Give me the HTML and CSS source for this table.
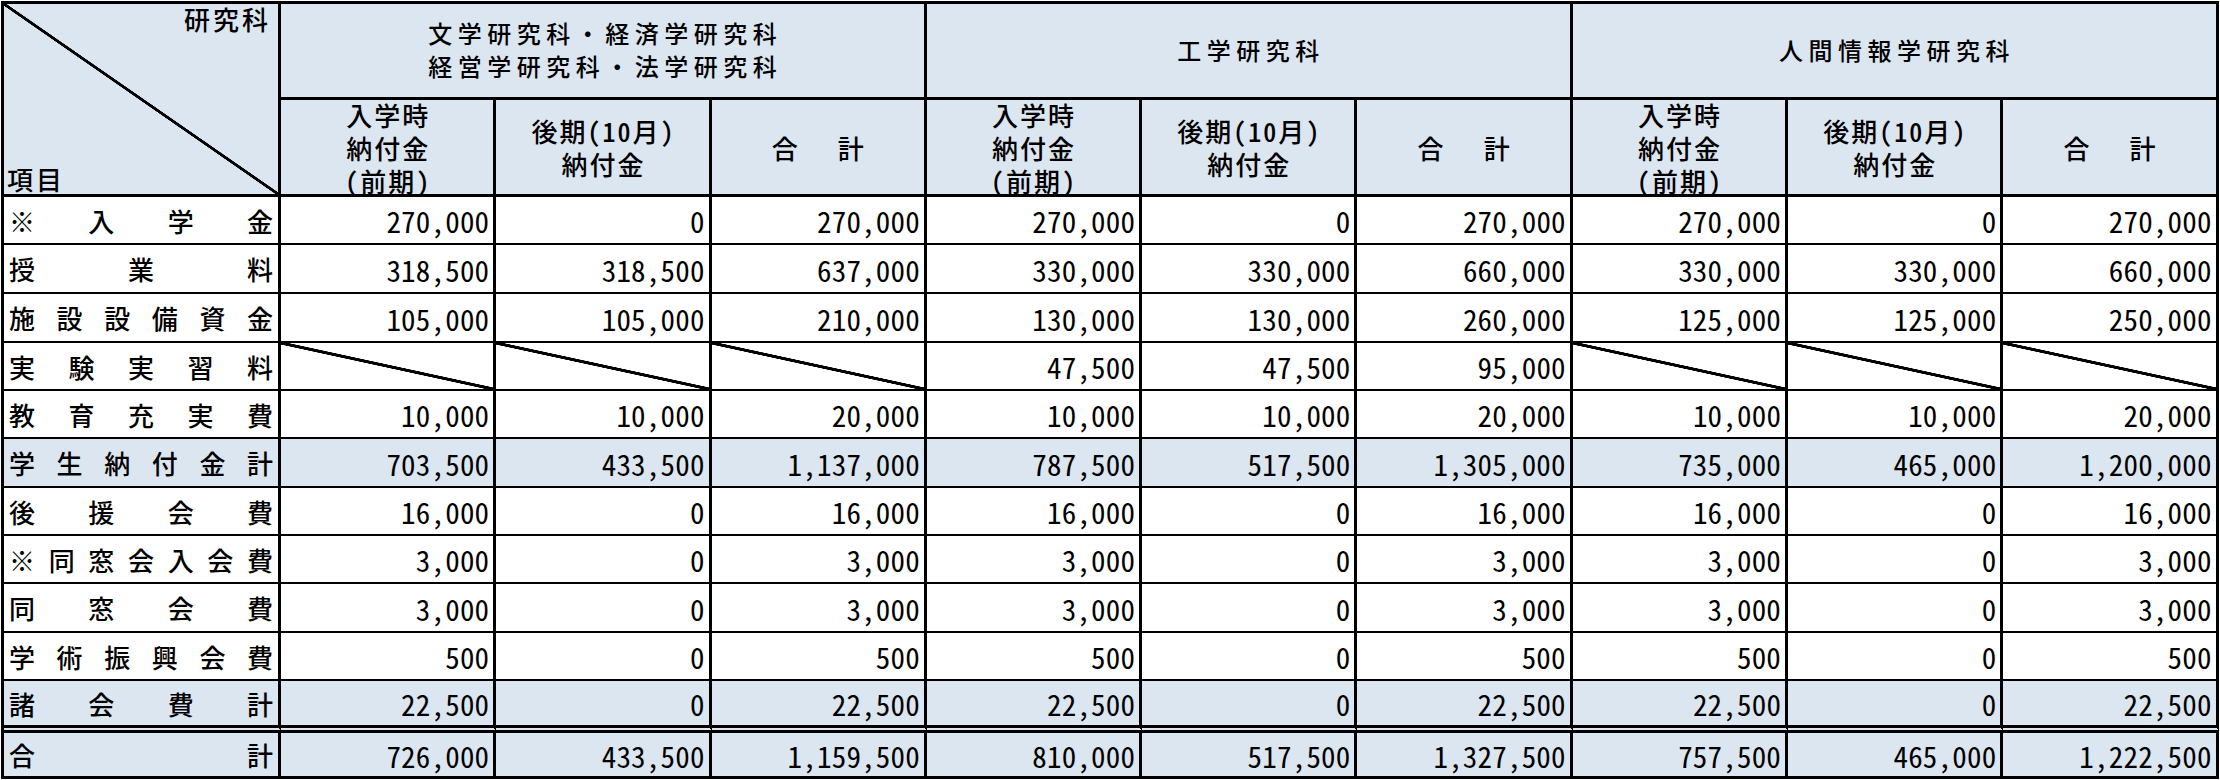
FILE: index.html
```html
<!DOCTYPE html>
<html lang="ja">
<head>
<meta charset="utf-8">
<title>学生納付金</title>
<link rel="stylesheet" href="styles.css">
</head>
<body>
<div class="sheet">
  <div class="cell hd corner"><span class="corner-top">研究科</span><span class="corner-bottom">項目</span></div>
  <div class="cell hd group"><p>文学研究科・経済学研究科<br>経営学研究科・法学研究科</p></div>
  <div class="cell hd group"><p>工学研究科</p></div>
  <div class="cell hd group"><p>人間情報学研究科</p></div>

  <div class="cell hd sub"><p>入学時<br>納付金<br>(前期)</p></div>
  <div class="cell hd sub"><p>後期(10月)<br>納付金</p></div>
  <div class="cell hd sub"><p class="pair"><span>合</span><span>計</span></p></div>
  <div class="cell hd sub"><p>入学時<br>納付金<br>(前期)</p></div>
  <div class="cell hd sub"><p>後期(10月)<br>納付金</p></div>
  <div class="cell hd sub"><p class="pair"><span>合</span><span>計</span></p></div>
  <div class="cell hd sub"><p>入学時<br>納付金<br>(前期)</p></div>
  <div class="cell hd sub"><p>後期(10月)<br>納付金</p></div>
  <div class="cell hd sub"><p class="pair"><span>合</span><span>計</span></p></div>

  <div class="cell label"><span>※</span><span>入</span><span>学</span><span>金</span></div>
  <div class="cell num">270,000</div><div class="cell num">0</div><div class="cell num">270,000</div>
  <div class="cell num">270,000</div><div class="cell num">0</div><div class="cell num">270,000</div>
  <div class="cell num">270,000</div><div class="cell num">0</div><div class="cell num">270,000</div>

  <div class="cell label"><span>授</span><span>業</span><span>料</span></div>
  <div class="cell num">318,500</div><div class="cell num">318,500</div><div class="cell num">637,000</div>
  <div class="cell num">330,000</div><div class="cell num">330,000</div><div class="cell num">660,000</div>
  <div class="cell num">330,000</div><div class="cell num">330,000</div><div class="cell num">660,000</div>

  <div class="cell label"><span>施</span><span>設</span><span>設</span><span>備</span><span>資</span><span>金</span></div>
  <div class="cell num">105,000</div><div class="cell num">105,000</div><div class="cell num">210,000</div>
  <div class="cell num">130,000</div><div class="cell num">130,000</div><div class="cell num">260,000</div>
  <div class="cell num">125,000</div><div class="cell num">125,000</div><div class="cell num">250,000</div>

  <div class="cell label"><span>実</span><span>験</span><span>実</span><span>習</span><span>料</span></div>
  <div class="cell slash"></div><div class="cell slash"></div><div class="cell slash"></div>
  <div class="cell num">47,500</div><div class="cell num">47,500</div><div class="cell num">95,000</div>
  <div class="cell slash"></div><div class="cell slash"></div><div class="cell slash"></div>

  <div class="cell label"><span>教</span><span>育</span><span>充</span><span>実</span><span>費</span></div>
  <div class="cell num">10,000</div><div class="cell num">10,000</div><div class="cell num">20,000</div>
  <div class="cell num">10,000</div><div class="cell num">10,000</div><div class="cell num">20,000</div>
  <div class="cell num">10,000</div><div class="cell num">10,000</div><div class="cell num">20,000</div>

  <div class="cell label sum"><span>学</span><span>生</span><span>納</span><span>付</span><span>金</span><span>計</span></div>
  <div class="cell num sum">703,500</div><div class="cell num sum">433,500</div><div class="cell num sum">1,137,000</div>
  <div class="cell num sum">787,500</div><div class="cell num sum">517,500</div><div class="cell num sum">1,305,000</div>
  <div class="cell num sum">735,000</div><div class="cell num sum">465,000</div><div class="cell num sum">1,200,000</div>

  <div class="cell label"><span>後</span><span>援</span><span>会</span><span>費</span></div>
  <div class="cell num">16,000</div><div class="cell num">0</div><div class="cell num">16,000</div>
  <div class="cell num">16,000</div><div class="cell num">0</div><div class="cell num">16,000</div>
  <div class="cell num">16,000</div><div class="cell num">0</div><div class="cell num">16,000</div>

  <div class="cell label"><span>※</span><span>同</span><span>窓</span><span>会</span><span>入</span><span>会</span><span>費</span></div>
  <div class="cell num">3,000</div><div class="cell num">0</div><div class="cell num">3,000</div>
  <div class="cell num">3,000</div><div class="cell num">0</div><div class="cell num">3,000</div>
  <div class="cell num">3,000</div><div class="cell num">0</div><div class="cell num">3,000</div>

  <div class="cell label"><span>同</span><span>窓</span><span>会</span><span>費</span></div>
  <div class="cell num">3,000</div><div class="cell num">0</div><div class="cell num">3,000</div>
  <div class="cell num">3,000</div><div class="cell num">0</div><div class="cell num">3,000</div>
  <div class="cell num">3,000</div><div class="cell num">0</div><div class="cell num">3,000</div>

  <div class="cell label"><span>学</span><span>術</span><span>振</span><span>興</span><span>会</span><span>費</span></div>
  <div class="cell num">500</div><div class="cell num">0</div><div class="cell num">500</div>
  <div class="cell num">500</div><div class="cell num">0</div><div class="cell num">500</div>
  <div class="cell num">500</div><div class="cell num">0</div><div class="cell num">500</div>

  <div class="cell label sum dbl"><span>諸</span><span>会</span><span>費</span><span>計</span></div>
  <div class="cell num sum dbl">22,500</div><div class="cell num sum dbl">0</div><div class="cell num sum dbl">22,500</div>
  <div class="cell num sum dbl">22,500</div><div class="cell num sum dbl">0</div><div class="cell num sum dbl">22,500</div>
  <div class="cell num sum dbl">22,500</div><div class="cell num sum dbl">0</div><div class="cell num sum dbl">22,500</div>

  <div class="cell label sum last"><span>合</span><span>計</span></div>
  <div class="cell num sum last">726,000</div><div class="cell num sum last">433,500</div><div class="cell num sum last">1,159,500</div>
  <div class="cell num sum last">810,000</div><div class="cell num sum last">517,500</div><div class="cell num sum last">1,327,500</div>
  <div class="cell num sum last">757,500</div><div class="cell num sum last">465,000</div><div class="cell num sum last">1,222,500</div>
</div>
</body>
</html>
```

FILE: styles.css
```css
* {
  box-sizing: border-box;
}

body {
  margin: 0;
  background: #ffffff;
  color: #000000;
  font-family: "Noto Sans CJK JP", "Noto Sans", sans-serif;
  font-weight: 500;
}

p {
  margin: 0;
}

.sheet {
  display: grid;
  grid-template-columns: 277px repeat(9, 215.3px);
  grid-template-rows: 96px 97px 48px 49px 49px 48px 48px 49px 48px 48px 49px 48px 52px 46px;
  width: max-content;
  margin: 1px 0 0 1px;
  border-top: 3px solid #000;
  border-left: 3px solid #000;
}

.cell {
  display: flex;
  align-items: center;
  min-width: 0;
  background: #ffffff;
  border-right: 3px solid #000;
  border-bottom: 2px solid #000;
  white-space: nowrap;
}

.hd {
  background: #dce6f1;
  border-bottom-width: 3px;
}

.sum {
  background: #dce6f1;
}

.last {
  border-bottom-width: 3px;
}

.dbl {
  border-bottom: 8px double #000;
}

.corner {
  grid-row: span 2;
  flex-direction: column;
  align-items: stretch;
  justify-content: space-between;
  font-size: 26px;
  line-height: 30px;
  letter-spacing: 3px;
  background:
    linear-gradient(to top right,
      transparent calc(50% - 1.7px),
      #000 calc(50% - 1.2px),
      #000 calc(50% + 1.2px),
      transparent calc(50% + 1.7px)) no-repeat,
    #dce6f1;
}

.corner-top {
  align-self: flex-end;
  padding-right: 7px;
}

.corner-bottom {
  align-self: flex-start;
  padding-left: 3px;
}

.group {
  grid-column: span 3;
  justify-content: center;
  text-align: center;
  font-size: 24px;
  line-height: 33px;
  letter-spacing: 5.5px;
  padding: 0 0 3px 5.5px;
}

.sub {
  justify-content: center;
  text-align: center;
  font-size: 26px;
  line-height: 33px;
  letter-spacing: 2px;
  padding-left: 2px;
  font-feature-settings: "hwid" 1;
}

.pair {
  display: flex;
  gap: 40px;
  letter-spacing: 0;
  margin-left: -2px;
}

.num {
  justify-content: flex-end;
  font-size: 29px;
  font-weight: 400;
  letter-spacing: 0.2px;
  padding-right: 4px;
  font-feature-settings: "hwid" 1;
}

.label {
  justify-content: space-between;
  font-size: 26px;
  padding: 0 5px 0 5px;
}

.slash {
  background: linear-gradient(to top right,
    transparent calc(50% - 1.8px),
    #000 calc(50% - 1.3px),
    #000 calc(50% + 1.3px),
    transparent calc(50% + 1.8px)) no-repeat, #ffffff;
}
```
